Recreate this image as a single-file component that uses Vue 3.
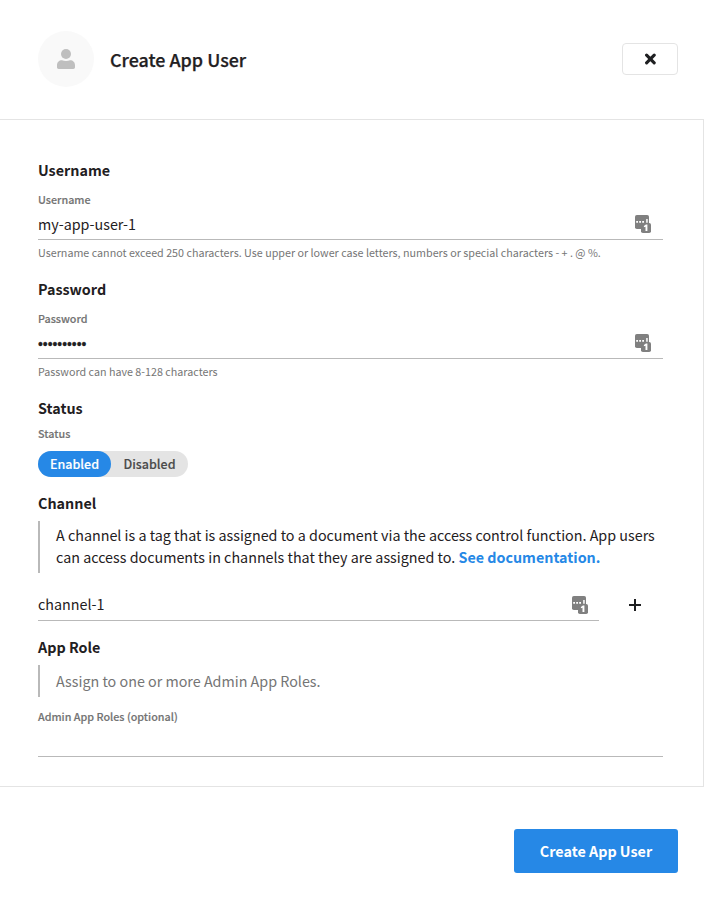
<script setup>
import { ref, h } from 'vue'

const username = ref('my-app-user-1')
const password = ref('••••••••••')
const channel = ref('channel-1')
const enabled = ref(true)

const KeyIcon = () =>
  h('svg', { width: 17, height: 19, viewBox: '0 0 17 19' }, [
    h('rect', { x: 0, y: 0, width: 14, height: 14, rx: 1.8, fill: '#808080' }),
    h('rect', { x: 6, y: 8, width: 10, height: 10, rx: 1.8, fill: '#808080' }),
    h('path', { d: 'M1.2 6h1.8v1.8H1.2zM4.2 6h1.8v1.8H4.2zM7.2 6h1.8v1.8H7.2zM11.2 4h1.5v3.8h-1.5z', fill: '#fff' }),
    h('path', { d: 'M8.9 11l2-1.4h1.5v6.4h-1.900v-4.300l-1.600.5z', fill: '#fff' })
  ])
</script>

<template>
  <div class="page">
    <header class="header">
      <div class="avatar">
        <svg width="18" height="20" viewBox="0 0 18 20">
          <circle cx="9" cy="5" r="5" fill="#bfbfbf" />
          <path d="M5 11.3c1.1.5 2.5.8 4 .8s2.900-.3 4-.8c3 0 5 2 5 5v2c0 1.100-.7 1.700-1.700 1.700H1.700C.7 20 0 19.400 0 18.300v-2c0-3 2-5 5-5z" fill="#bfbfbf" />
        </svg>
      </div>
      <h1 class="title">Create App User</h1>
      <button class="close">
        <svg width="12" height="12" viewBox="0 0 12 12">
          <path d="M2.600 2.200l7.600 7.600M10.200 2.200l-7.600 7.600" stroke="#1f2022" stroke-width="3.100" stroke-linecap="round" />
        </svg>
      </button>
    </header>

    <main class="body">
      <h2 class="heading">Username</h2>
      <div class="label">Username</div>
      <div class="field"><span class="value">{{ username }}</span><KeyIcon class="key" /></div>
      <p class="help">Username cannot exceed 250 characters. Use upper or lower case letters, numbers or special characters - + . @ %.</p>

      <h2 class="heading">Password</h2>
      <div class="label">Password</div>
      <div class="field"><span class="value dots">{{ password }}</span><KeyIcon class="key" /></div>
      <p class="help">Password can have 8-128 characters</p>

      <h2 class="heading">Status</h2>
      <div class="label label-status">Status</div>
      <div class="toggle">
        <button class="option" :class="{ active: enabled }" @click="enabled = true">Enabled</button>
        <button class="option" :class="{ active: !enabled }" @click="enabled = false">Disabled</button>
      </div>

      <h2 class="heading">Channel</h2>
      <div class="quote">A channel is a tag that is assigned to a document via the access control function. App users<br>can access documents in channels that they are assigned to. <a class="link">See documentation.</a></div>
      <div class="channel-row">
        <div class="field"><span class="value">{{ channel }}</span><KeyIcon class="key" /></div>
        <svg class="plus" width="12" height="12" viewBox="0 0 12 12"><path d="M6 0v12M0 6h12" stroke="#1f2022" stroke-width="2" /></svg>
      </div>

      <h2 class="heading">App Role</h2>
      <div class="quote muted">Assign to one or more Admin App Roles.</div>
      <div class="label label-roles">Admin App Roles (optional)</div>
      <div class="field empty"></div>
    </main>

    <footer class="footer">
      <button class="submit">Create App User</button>
    </footer>
  </div>
</template>

<style>
body { background: #fff; }
</style>

<style scoped>
.page {
  width: 704px;
  height: 907px;
  display: flex;
  flex-direction: column;
  overflow: hidden;
  color: #1f2022;
  font-family: "Noto Sans CJK SC", "Noto Sans", sans-serif;
  font-size: 14.325px;
}
.page * { box-sizing: border-box; }
h1, h2, p { margin: 0; }
button { font-family: inherit; padding: 0; border: 0; }
svg { display: block; flex: none; }
.header {
  height: 119px;
  flex: none;
  padding: 0 26px 1px 38px;
  display: flex;
  align-items: center;
}
.avatar {
  width: 56px;
  height: 56px;
  border-radius: 50%;
  background: #f9f9f9;
  display: flex;
  align-items: center;
  justify-content: center;
}
.title {
  margin-left: 16px;
  font-size: 17.9px;
  line-height: 26px;
  font-weight: 500;
  -webkit-text-stroke: 0.25px currentColor;
}
.close {
  margin-left: auto;
  width: 56px;
  height: 32px;
  border: 1px solid #e4e4e4;
  border-radius: 4px;
  background: #fff;
  display: flex;
  align-items: center;
  justify-content: center;
}
.body {
  flex: none;
  height: 668px;
  border: 1px solid #e4e4e4;
  border-left: 0;
  padding: 39px 40px 0 38px;
  white-space: nowrap;
}
.heading { font-size: 14.33px; line-height: 22px; font-weight: 700; }
.label {
  margin-top: 10px;
  font-size: 10.76px;
  line-height: 18px;
  font-weight: 500;
  color: #737373;
  -webkit-text-stroke: 0.15px currentColor;
}
.field {
  margin-top: 4px;
  height: 27px;
  border-bottom: 1px solid #b9b9b9;
  display: flex;
  justify-content: space-between;
  padding-right: 11px;
}
.value { line-height: 22px; }
.dots {
  font-family: "Liberation Sans", sans-serif;
  font-size: 13.8px;
  padding-top: 2px;
  -webkit-text-stroke: 0.3px currentColor;
}
.key { margin-top: 2px; }
.help {
  margin: 4px 0 16px;
  font-size: 10.74px;
  line-height: 18px;
  color: #757575;
}
.label-status { margin-top: 6px; }
.toggle {
  margin: 8px 0 15px;
  width: 150px;
  height: 26px;
  border-radius: 13px;
  background: #e4e4e4;
  display: flex;
}
.option {
  flex: 1 1 77px;
  border-radius: 13px;
  background: none;
  color: #4b4b4b;
  font-size: 12.53px;
  line-height: 26px;
  font-weight: 500;
  -webkit-text-stroke: 0.15px currentColor;
}
.option.active { flex: 0 0 73px; background: #2688e6; color: #fff; }
.quote {
  margin-top: 7px;
  border-left: 2px solid #b9b9b9;
  padding: 3px 0 5px 16px;
  line-height: 22px;
}
.link { color: #2688e6; font-weight: 700; }
.muted { color: #757575; padding: 5px 0 5px 16px; }
.channel-row { display: flex; margin: 20px 0 15px; }
.channel-row .field { width: 561px; height: 28px; margin: 0; padding-right: 10px; }
.channel-row .key { margin-top: 3px; }
.plus { margin: 6px 0 0 30px; }
.label-roles { margin-top: 11px; }
.empty { margin-top: 3px; height: 28px; }
.footer {
  flex: 1;
  padding: 42px 26px 0 0;
  display: flex;
  justify-content: flex-end;
  align-items: flex-start;
}
.submit {
  width: 164px;
  height: 44px;
  padding-bottom: 2px;
  border-radius: 3px;
  background: #2688e6;
  color: #fff;
  font-size: 14.33px;
  font-weight: 700;
}
</style>
